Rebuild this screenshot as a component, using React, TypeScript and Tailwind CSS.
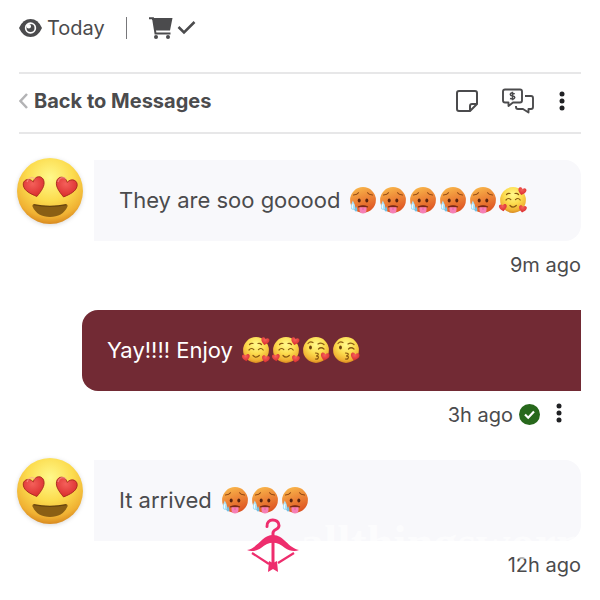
import type { ReactNode } from "react";

const HEART = "M16 28C8 22 2 17 2 10C2 2 12 0 16 8C20 0 30 2 30 10C30 17 24 22 16 28Z";

function Gradients() {
  return (
    <svg className="absolute h-0 w-0" aria-hidden="true">
      <defs>
        <radialGradient id="face" cx="50%" cy="30%" r="70%">
          <stop offset="0" stopColor="#fff98c" />
          <stop offset="0.5" stopColor="#fcdc4e" />
          <stop offset="0.85" stopColor="#f0b133" />
          <stop offset="1" stopColor="#d98a1f" />
        </radialGradient>
        <linearGradient id="hot" x1="0.3" y1="0" x2="0.65" y2="1">
          <stop offset="0" stopColor="#f9b64a" />
          <stop offset="0.5" stopColor="#ec8236" />
          <stop offset="1" stopColor="#dc5022" />
        </linearGradient>
        <radialGradient id="heart" cx="45%" cy="30%" r="70%">
          <stop offset="0" stopColor="#f4605a" />
          <stop offset="1" stopColor="#d92a2c" />
        </radialGradient>
      </defs>
    </svg>
  );
}

function Avatar() {
  return (
    <svg className="-ml-[3px] -mt-[3px] h-[68px] w-[68px] shrink-0 drop-shadow-sm" viewBox="0 0 68 68" role="img" aria-label="Smiling face with heart eyes">
      <circle cx="34" cy="34" r="33" fill="url(#face)" />
      <g fill="url(#heart)" stroke="#a92c20" strokeWidth="1.2">
        <path d={HEART} transform="translate(6.5 19) rotate(-14 11 11) scale(.75)" />
        <path d={HEART} transform="translate(38 19) rotate(14 11 11) scale(.75)" />
      </g>
      <path d="M11 25C12 21 16 19 19 22M42 25C43 21 47 19 50 22" fill="none" stroke="#ffa09a" strokeWidth="1.4" opacity=".6" />
      <path d="M17.500 47.500Q34 51 50.500 47.500Q52 47.500 51.500 49.500C48.500 56.500 42 60 34 60C26 60 19.500 56.500 16.500 49.500Q16 47.500 17.500 47.500Z" fill="#8a5f14" />
      <path d="M17.500 47.700Q34 51.200 50.500 47.700" fill="none" stroke="#65430d" strokeWidth="1.2" />
    </svg>
  );
}

function Emoji({ label, children }: { label: string; children: ReactNode }) {
  return (
    <svg className="h-7 w-[30px] shrink-0" viewBox="0 0 30 28" role="img" aria-label={label}>
      {children}
    </svg>
  );
}

function Hot() {
  return (
    <Emoji label="Hot face">
      <circle cx="15" cy="14" r="12.900" fill="url(#hot)" />
      <path d="M5.500 9Q9 9 10.500 6.800M19.500 6.800Q21 9 24.500 9" fill="none" stroke="#8a4513" strokeWidth="1.100" strokeLinecap="round" />
      <ellipse cx="11.200" cy="14.500" rx="1.500" ry="1.900" fill="#5a2410" />
      <ellipse cx="18.800" cy="14.500" rx="1.500" ry="1.900" fill="#5a2410" />
      <path d="M10.500 20.800Q15 18.800 19.500 20.800Z" fill="#7a2a16" stroke="#7a2a16" strokeWidth="1.200" strokeLinejoin="round" />
      <path d="M11.500 21.200H18.500V24A3.500 3.400 0 0 1 11.500 24Z" fill="#f67fb6" />
      <path d="M15 21.500V24" stroke="#dc5897" strokeWidth=".7" />
      <path d="M4.800 14.500Q7.600 19 7.200 22.500Q5.500 25.500 3 22.500Q2.400 19 4.800 14.500Z" fill="#a8e0f6" />
      <path d="M5 18Q3.800 20.500 4.600 22.500" fill="none" stroke="#effcff" strokeWidth="1.200" />
      <path d="M8 20Q9.800 23 9.200 25Q7.600 26 6.600 24.500Q7 22 8 20Z" fill="#6fc0e6" />
    </Emoji>
  );
}

function Loving() {
  return (
    <Emoji label="Smiling face with hearts">
      <circle cx="15" cy="14" r="12.900" fill="url(#face)" />
      <path d="M8.500 8.500Q10 6.800 12 7.500M17 7.500Q19 6.800 20.500 8.500M8 14Q10.300 11.200 12.800 13.700M17.500 13.700Q20 11.200 22.200 14M12 19.500Q15 22.800 18.300 19.500" fill="none" stroke="#8a5a12" strokeWidth="1.200" strokeLinecap="round" />
      <g fill="url(#heart)">
        <path d={HEART} transform="translate(20.500 0) rotate(12) scale(.29)" />
        <path d={HEART} transform="translate(0 18) rotate(-8) scale(.28)" />
        <path d={HEART} transform="translate(21 18) rotate(10) scale(.28)" />
      </g>
    </Emoji>
  );
}

function Kiss() {
  return (
    <Emoji label="Face blowing a kiss">
      <circle cx="15" cy="14" r="12.900" fill="url(#face)" />
      <path d="M7 7.500Q9 5 12 6.500M17 8Q20 6 23 8.500M17.500 13Q20 10.500 23 13" fill="none" stroke="#8a5a12" strokeWidth="1.200" strokeLinecap="round" />
      <ellipse cx="9.500" cy="11.500" rx="1.400" ry="2" fill="#6b400c" />
      <path d="M14.500 17Q18.500 17 16.800 19.300Q15.500 20 15 20Q18.500 20 17 22.500Q16 23.500 14.500 23" fill="none" stroke="#8a5a12" strokeWidth="1.200" strokeLinecap="round" />
      <path d={HEART} transform="translate(20 15) rotate(12) scale(.31)" fill="url(#heart)" />
    </Emoji>
  );
}

function Dots() {
  return (
    <svg className="h-5 w-2" viewBox="0 0 8 20" fill="#202124" aria-hidden="true">
      <circle cx="4" cy="3" r="2.500" />
      <circle cx="4" cy="10" r="2.500" />
      <circle cx="4" cy="17" r="2.500" />
    </svg>
  );
}

function Received({ text, time, children }: { text: string; time: string; children: ReactNode }) {
  return (
    <article>
      <div className="flex items-start gap-2.5">
        <Avatar />
        <div className="flex h-[81px] flex-1 items-center rounded-r-2xl bg-[#f8f8fb] pb-0.5 pl-[25px]">
          <p className="mr-2 whitespace-nowrap">{text}</p>
          <div className="flex">{children}</div>
        </div>
      </div>
      <div className="flex h-[69px] items-start justify-end pt-2.5 text-xl leading-7">
        <time>{time}</time>
      </div>
    </article>
  );
}

function Watermark() {
  return (
    <div className="pointer-events-none absolute left-[246px] top-[517px] flex">
      <svg className="h-[56px] w-[54px] shrink-0" viewBox="0 0 54 56" aria-hidden="true">
        <g fill="none" stroke="#ee2d6d">
          <path d="M21 9.500C20 1 33 1 33 8.500C33 13 27 12 27 16V20" strokeWidth="3" strokeLinecap="round" />
          <path d="M27 23V46" strokeWidth="3" />
          <path d="M6 36L23 47M48 36L32 46" strokeWidth="2.200" />
        </g>
        <path d="M1 33C12 31 16 18 27 18C38 18 42 31 53 33C49 35 43 34 39 31C31 24 23 24 15 31C11 34 5 35 1 33Z" fill="#ee2d6d" />
        <path d="M23 44L27 46L31 44L32 55L27 52L22 55Z" fill="#ee2d6d" />
      </svg>
      <div className="whitespace-nowrap pt-0.5 font-['Liberation_Serif',serif] text-5xl font-bold text-white/60">
        allthingsworn
      </div>
    </div>
  );
}

export default function App() {
  return (
    <main className="relative min-h-screen overflow-hidden bg-white px-[19px] font-['Inter',sans-serif] text-[22px] leading-7 text-[#4b4b4d]">
      <Gradients />
      <header className="flex h-[72px] items-start pt-3.5 text-xl leading-7">
        <svg className="mt-1 h-5 w-[23px]" viewBox="0 0 23 20" aria-hidden="true">
          <path d="M0 10Q4 1 11.500 1T23 10Q19 19 11.500 19T0 10Z" fill="#4b4b4d" />
          <circle cx="11.500" cy="10" r="5.700" fill="#fff" />
          <circle cx="11.500" cy="10" r="4" fill="#4b4b4d" />
          <circle cx="9.800" cy="8.200" r="2.200" fill="#fff" />
        </svg>
        <span className="ml-[5px]">Today</span>
        <span className="ml-[21px] mt-[3px] h-[22px] w-px bg-[#77777a]" />
        <svg className="ml-[22px] mt-[3px] h-[22px] w-6" viewBox="0 0 24 22" aria-hidden="true">
          <path d="M3 1H23.500L21 13.500H6L4 3H3Z" fill="#4b4b4d" />
          <path d="M0 1.200H4L6.500 16.500H21.500" fill="none" stroke="#4b4b4d" strokeWidth="2" />
          <circle cx="7" cy="20" r="2" fill="#4b4b4d" />
          <circle cx="19" cy="20" r="2" fill="#4b4b4d" />
        </svg>
        <svg className="ml-1 mt-1.5 h-4 w-[19px]" viewBox="0 0 19 16" fill="none" stroke="#4b4b4d" strokeWidth="2.500" aria-hidden="true">
          <path d="M1.500 7L7 12.500L17.500 2" />
        </svg>
      </header>

      <nav className="flex h-[62px] items-center justify-between border-y-2 border-[#e7e7e8] pb-1">
        <button className="flex items-center gap-1.5 text-xl font-bold leading-7">
          <svg className="h-4 w-[9px]" viewBox="0 0 9 16" fill="none" stroke="#b3b3b5" strokeWidth="2.500" aria-hidden="true">
            <path d="M8 1L1.500 8L8 15" />
          </svg>
          Back to Messages
        </button>
        <div className="flex items-center pr-[15px]">
          <button aria-label="Notes">
            <svg className="h-6 w-6" viewBox="0 0 24 24" fill="none" stroke="#4b4b4d" strokeWidth="2" strokeLinejoin="round" aria-hidden="true">
              <path d="M4 2H20Q22 2 22 4V15L15 22H4Q2 22 2 20V4Q2 2 4 2Z" />
              <path d="M15 21.500V17Q15 15 17 15H21.500" />
            </svg>
          </button>
          <button className="ml-[23px]" aria-label="Send offer">
            <svg className="h-[26px] w-8" viewBox="0 0 32 26" fill="none" stroke="#4b4b4d" strokeWidth="1.900" strokeLinejoin="round" aria-hidden="true">
              <path d="M3 1.500H18Q20 1.500 20 3.500V12.500Q20 14.500 18 14.500H11L6.500 18V14.500H3Q1 14.500 1 12.500V3.500Q1 1.500 3 1.500Z" />
              <path d="M23 8H29Q31 8 31 10V19Q31 21 29 21H26.500V24.500L21 21H16Q14 21 14 19V18" />
              <path d="M12.700 5.700Q8.300 4 8.300 6.500C8.300 8.700 12.800 7.300 12.800 9.500Q12.500 11.800 8 10.500M10.500 3.800V12.200" strokeWidth="1.500" />
            </svg>
          </button>
          <button className="ml-6 flex" aria-label="Conversation options"><Dots /></button>
        </div>
      </nav>

      <section className="pt-[26px]" aria-label="Messages">
        <Received text="They are soo gooood" time="9m ago">
          <Hot /><Hot /><Hot /><Hot /><Hot /><Loving />
        </Received>
        <article>
          <div className="ml-[63px] flex h-[81px] items-center rounded-l-2xl bg-[#722a34] pb-0.5 pl-[25px] text-white">
            <p className="mr-2 whitespace-nowrap">Yay!!!! Enjoy</p>
            <div className="flex"><Loving /><Loving /><Kiss /><Kiss /></div>
          </div>
          <div className="flex h-[69px] items-start justify-end pr-[18px] pt-2.5 text-xl leading-7">
            <time>3h ago</time>
            <svg className="ml-1.5 mt-[3px] h-[21px] w-[21px]" viewBox="0 0 21 21" role="img" aria-label="Delivered">
              <circle cx="10.500" cy="10.500" r="10.500" fill="#27681c" />
              <path d="M6 10.500L9.200 13.700L15 7.500" fill="none" stroke="#fff" strokeWidth="2.200" />
            </svg>
            <button className="ml-[15px] mt-0.5" aria-label="Message options"><Dots /></button>
          </div>
        </article>
        <Received text="It arrived" time="12h ago">
          <Hot /><Hot /><Hot />
        </Received>
      </section>
      <Watermark />
    </main>
  );
}
